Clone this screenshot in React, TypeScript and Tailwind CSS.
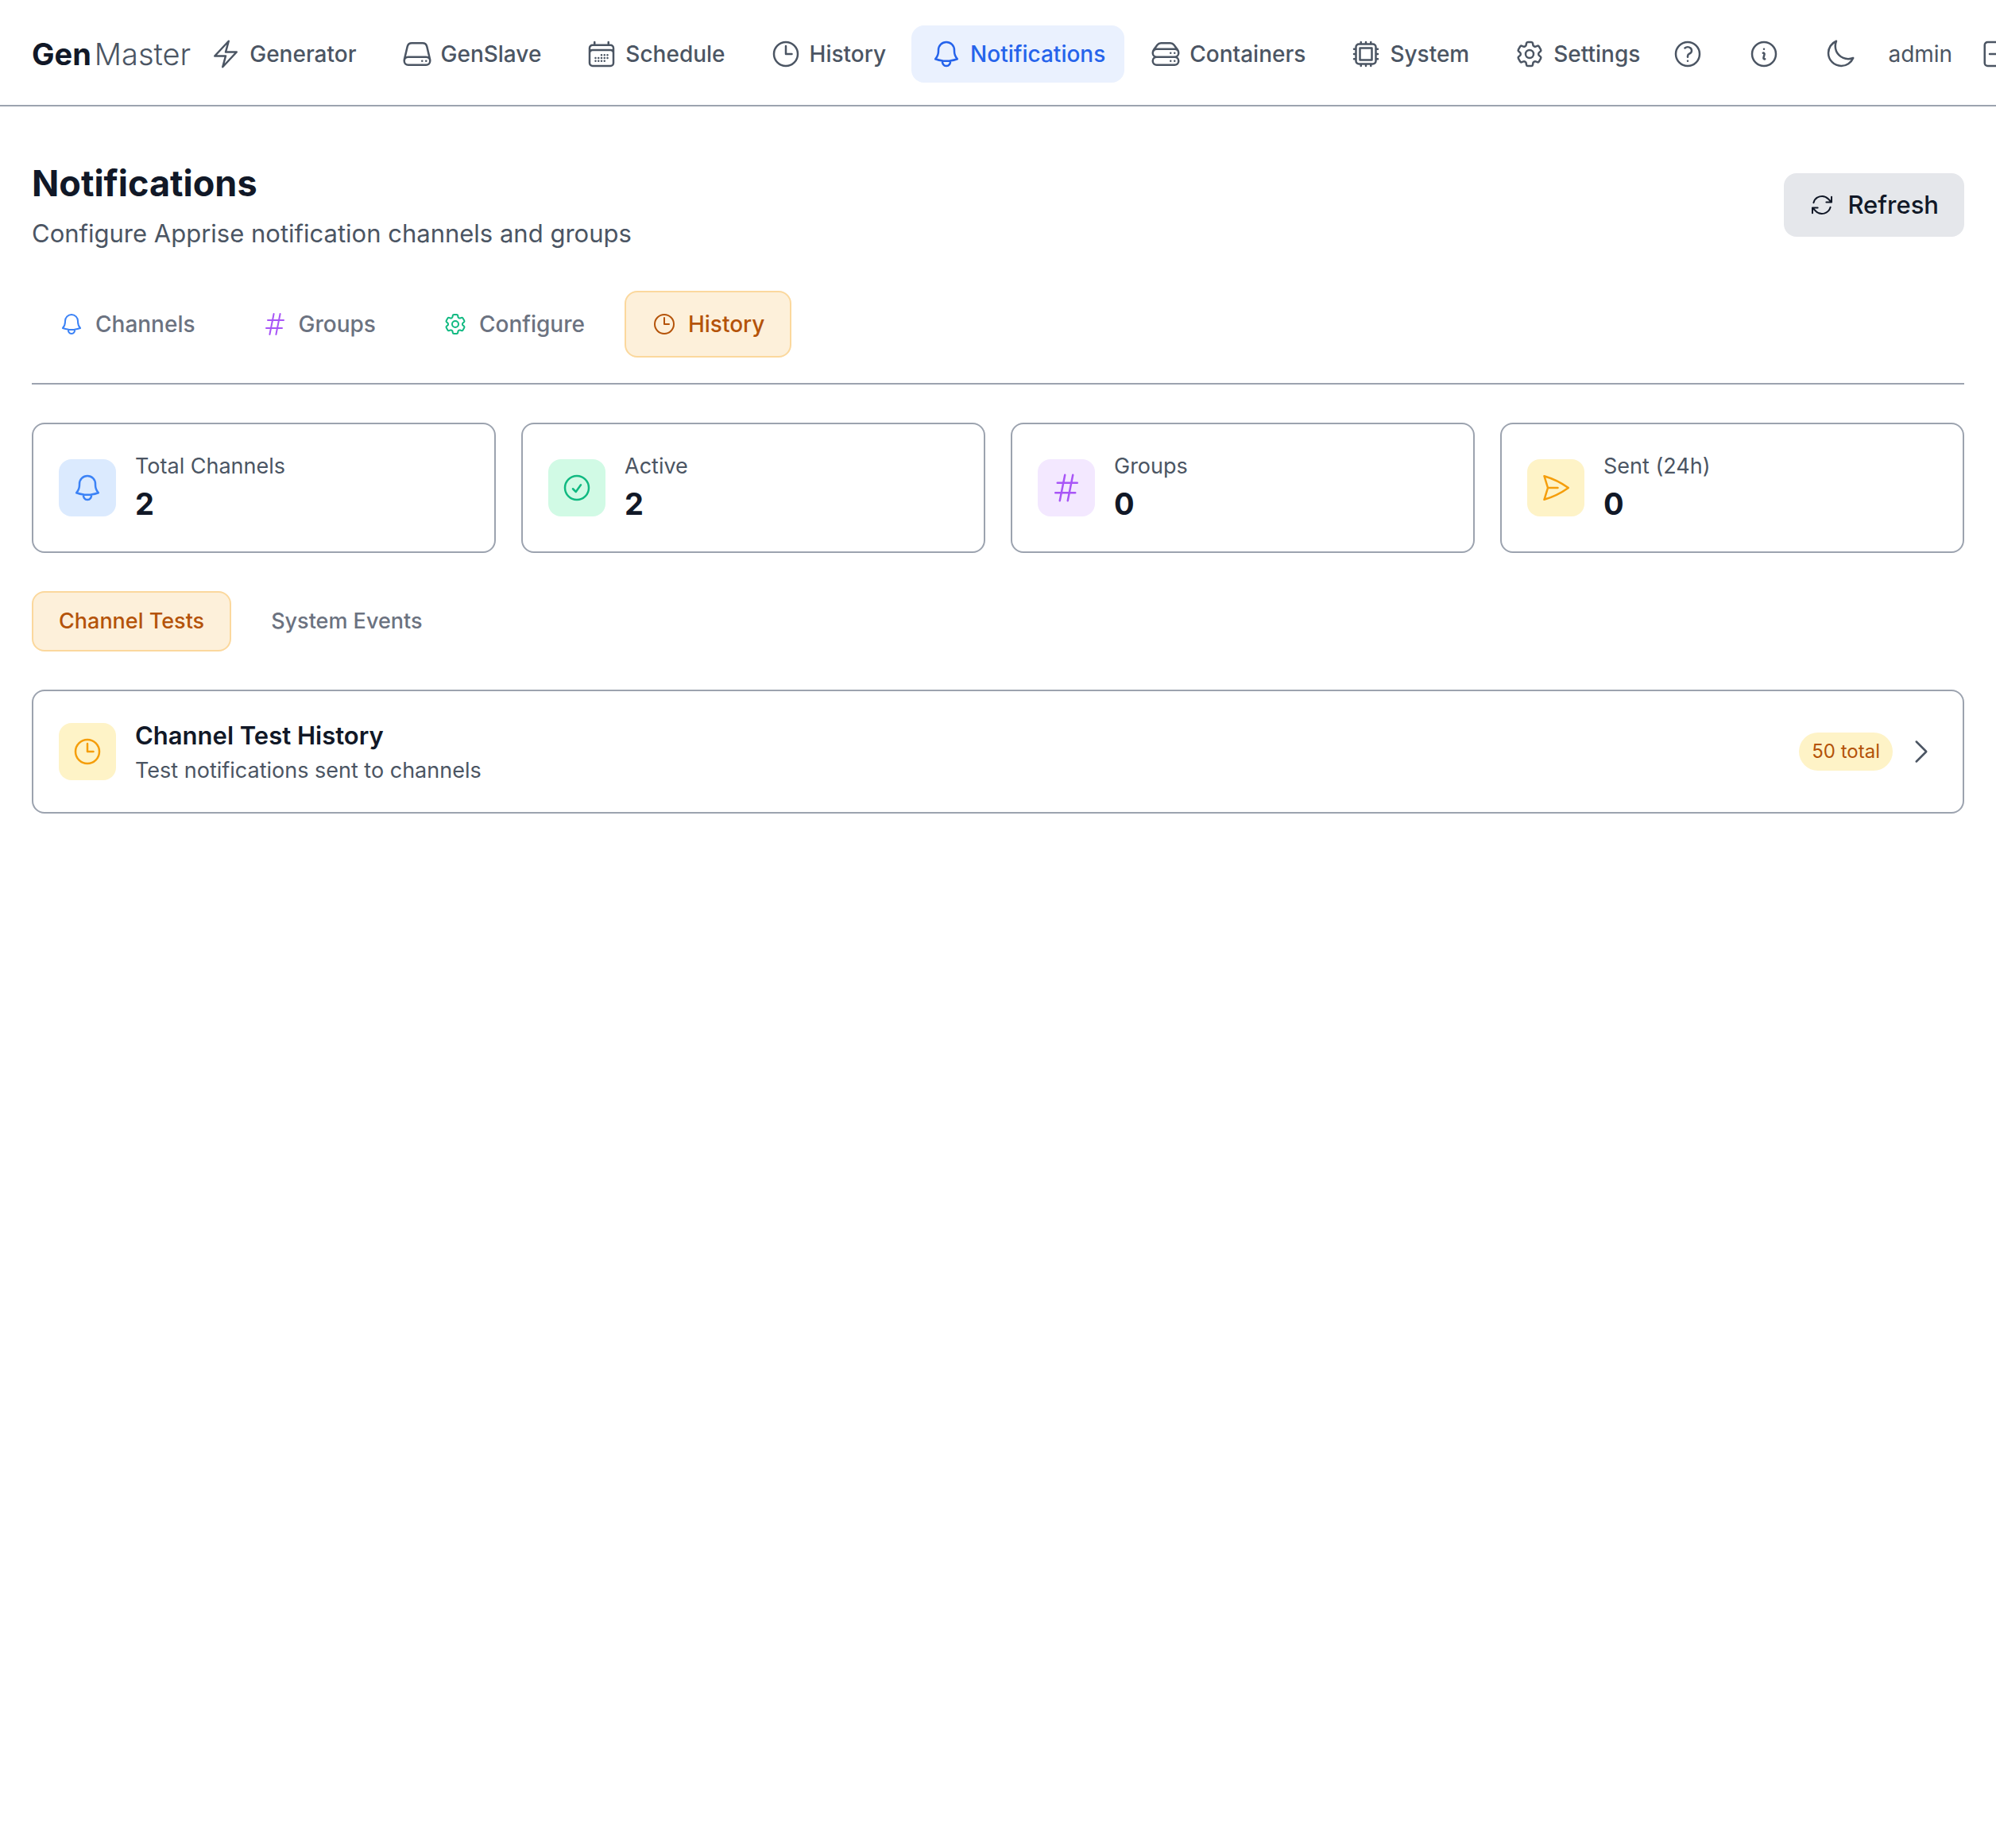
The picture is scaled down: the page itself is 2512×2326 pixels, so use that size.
import React, { useState } from "react";
import type { IconType } from "react-icons";
import {
  HiOutlineArrowPath,
  HiOutlineArrowRightOnRectangle,
  HiOutlineBell,
  HiOutlineBolt,
  HiOutlineCalendarDays,
  HiOutlineCheckCircle,
  HiOutlineChevronRight,
  HiOutlineClock,
  HiOutlineCog6Tooth,
  HiOutlineCpuChip,
  HiOutlineHashtag,
  HiOutlineInformationCircle,
  HiOutlineMoon,
  HiOutlinePaperAirplane,
  HiOutlineQuestionMarkCircle,
  HiOutlineServer,
  HiOutlineServerStack,
} from "react-icons/hi2";

type NavItem = { label: string; icon: IconType };

const navItems: NavItem[] = [
  { label: "Generator", icon: HiOutlineBolt },
  { label: "GenSlave", icon: HiOutlineServer },
  { label: "Schedule", icon: HiOutlineCalendarDays },
  { label: "History", icon: HiOutlineClock },
  { label: "Notifications", icon: HiOutlineBell },
  { label: "Containers", icon: HiOutlineServerStack },
  { label: "System", icon: HiOutlineCpuChip },
  { label: "Settings", icon: HiOutlineCog6Tooth },
];

const actions: NavItem[] = [
  { label: "Help", icon: HiOutlineQuestionMarkCircle },
  { label: "About", icon: HiOutlineInformationCircle },
  { label: "Toggle dark mode", icon: HiOutlineMoon },
];

const tabs = [
  { label: "Channels", icon: HiOutlineBell, color: "text-[#3b82f6]" },
  { label: "Groups", icon: HiOutlineHashtag, color: "text-[#a855f7]" },
  { label: "Configure", icon: HiOutlineCog6Tooth, color: "text-[#10b981]" },
  { label: "History", icon: HiOutlineClock, color: "text-[#f59e0b]" },
];

const stats = [
  { label: "Total Channels", value: 2, icon: HiOutlineBell, color: "bg-[#dbeafe] text-[#3b82f6]" },
  { label: "Active", value: 2, icon: HiOutlineCheckCircle, color: "bg-[#d1fae5] text-[#10b981]" },
  { label: "Groups", value: 0, icon: HiOutlineHashtag, color: "bg-[#f3e8ff] text-[#a855f7]" },
  { label: "Sent (24h)", value: 0, icon: HiOutlinePaperAirplane, color: "bg-[#fef3c7] text-[#f59e0b]" },
];

const activeTab = "border-[#fbd89d] bg-[#fdf0da] text-[#b45309]";
const idleTab = "border-transparent text-[#6b7280]";

function Header() {
  return (
    <header className="flex items-center overflow-hidden border-b-2 border-[#9ca3af] px-10 pt-8 pb-7">
      <a href="#" className="flex shrink-0 items-baseline gap-1 text-[38px] leading-[56px]">
        <span className="font-bold text-[#111827]">Gen</span>
        <span className="font-light text-[#4b5563]">Master</span>
      </a>
      <nav className="flex shrink-0 items-center gap-2">
        {navItems.map(({ label, icon: Icon }) => (
          <a
            key={label}
            href="#"
            className={`flex items-center gap-2.5 rounded-2xl px-6 py-4 text-[28px] leading-10 font-medium ${
              label === "Notifications" ? "bg-[#eaf1fe] text-[#2563eb]" : "text-[#4b5563]"
            }`}
          >
            <Icon className="size-10" />
            {label}
          </a>
        ))}
      </nav>
      <div className="flex shrink-0 items-center gap-6 text-[#4b5563]">
        {actions.map(({ label, icon: Icon }) => (
          <button key={label} aria-label={label} className="rounded-2xl p-4">
            <Icon className="size-10" />
          </button>
        ))}
        <div className="flex items-center gap-4">
          <span className="text-[28px] leading-10">admin</span>
          <button aria-label="Log out" className="rounded-2xl p-4">
            <HiOutlineArrowRightOnRectangle className="size-10" />
          </button>
        </div>
      </div>
    </header>
  );
}

function StatCard({ label, value, icon: Icon, color }: (typeof stats)[number]) {
  return (
    <div className="flex items-center gap-6 rounded-2xl border-2 border-[#9ca3af] p-8">
      <div className={`rounded-2xl p-4 ${color}`}>
        <Icon className="size-10" />
      </div>
      <div>
        <p className="text-[27px] leading-[41px] text-[#4b5563]">{label}</p>
        <p className="text-[38px] leading-[55px] font-bold text-[#111827]">{value}</p>
      </div>
    </div>
  );
}

export default function App() {
  const [tab, setTab] = useState("History");
  const [view, setView] = useState("Channel Tests");

  return (
    <div className="min-h-screen bg-white font-['Inter',sans-serif]">
      <Header />
      <main className="flex flex-col gap-12 px-10 pt-16 pb-16">
        <div className="flex items-center justify-between">
          <div>
            <h1 className="text-[45px] leading-[66px] font-bold text-[#111827]">Notifications</h1>
            <p className="mt-1.5 text-[31px] leading-[48px] text-[#4b5563]">
              Configure Apprise notification channels and groups
            </p>
          </div>
          <button className="flex items-center gap-4 rounded-2xl bg-[#e5e7eb] px-8 py-4 text-[31px] leading-[48px] font-medium text-[#111827]">
            <HiOutlineArrowPath className="size-8" />
            Refresh
          </button>
        </div>

        <div className="flex gap-4 border-b-2 border-[#9ca3af] pb-8">
          {tabs.map(({ label, icon: Icon, color }) => (
            <button
              key={label}
              onClick={() => setTab(label)}
              className={`flex items-center gap-3.5 rounded-2xl border-2 px-8 py-5 text-[28px] leading-10 font-medium ${
                tab === label ? activeTab : idleTab
              }`}
            >
              <Icon className={`size-8 ${tab === label ? "" : color}`} />
              {label}
            </button>
          ))}
        </div>

        <div className="grid grid-cols-4 gap-8">
          {stats.map((stat) => (
            <StatCard key={stat.label} {...stat} />
          ))}
        </div>

        <div className="flex gap-4">
          {["Channel Tests", "System Events"].map((label) => (
            <button
              key={label}
              onClick={() => setView(label)}
              className={`rounded-2xl border-2 px-8 py-4 text-[27px] leading-10 font-medium ${
                view === label ? activeTab : idleTab
              }`}
            >
              {label}
            </button>
          ))}
        </div>

        <button className="flex items-center gap-6 rounded-2xl border-2 border-[#9ca3af] p-8 text-left">
          <span className="rounded-2xl bg-[#fef3c7] p-4 text-[#f59e0b]">
            <HiOutlineClock className="size-10" />
          </span>
          <span className="flex flex-1 flex-col">
            <span className="text-[31px] leading-[48px] font-semibold text-[#111827]">
              Channel Test History
            </span>
            <span className="text-[27px] leading-10 text-[#4b5563]">Test notifications sent to channels</span>
          </span>
          <span className="flex items-center gap-4">
            <span className="rounded-full bg-[#fef3c7] px-4 py-2 text-[24px] leading-8 text-[#b45309]">
              50 total
            </span>
            <HiOutlineChevronRight className="size-10 text-[#4b5563]" />
          </span>
        </button>
      </main>
    </div>
  );
}
